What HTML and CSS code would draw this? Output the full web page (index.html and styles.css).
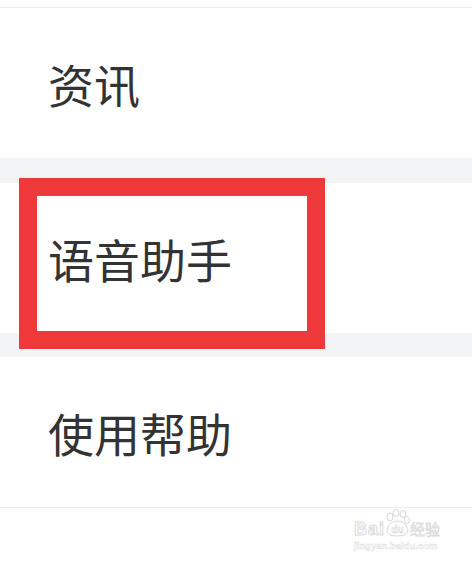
FILE: index.html
```html
<!DOCTYPE html>
<html lang="zh-CN">

<head>
    <meta charset="UTF-8">
    <meta name="viewport" content="width=device-width, initial-scale=1.0">
    <title>设置</title>
    <link rel="stylesheet" href="styles.css">
</head>

<body>
    <div class="page">
        <div class="menu">
            <div class="item">资讯</div>
            <div class="sep sep-a"></div>
            <div class="item">语音助手</div>
            <div class="sep sep-b"></div>
            <div class="item item-last">使用帮助</div>
        </div>

        <!-- red annotation box -->
        <div class="mark"></div>

        <div class="watermark">
            <div class="wm-top">
                <span class="wm-bai">Bai</span>
                <svg class="wm-paw" width="26" height="30" viewBox="0 0 26 30">
                    <g fill="none" stroke="#d8d8d8" stroke-width="1">
                        <ellipse cx="6" cy="8" rx="3" ry="4" />
                        <ellipse cx="12" cy="4" rx="3" ry="3.5" />
                        <ellipse cx="19" cy="5" rx="3" ry="3.5" />
                        <ellipse cx="23" cy="11" rx="2.5" ry="3.5" />
                        <path d="M3 20 Q6 12 13 12 Q21 12 24 20 Q25 27 13 27 Q2 27 3 20 Z" />
                    </g>
                    <text x="13.5" y="24" text-anchor="middle" class="wm-du">du</text>
                </svg>
                <span class="wm-jy">经验</span>
            </div>
            <div class="wm-url">jingyan.baidu.com</div>
        </div>
    </div>
</body>

</html>
```

FILE: styles.css
```css
body {
    margin: 0;
    background: #fff;
    font-family: "Noto Sans CJK SC", "Noto Sans", sans-serif;
}

.page {
    position: relative;
    width: 472px;
    height: 562px;
    overflow: hidden;
}

.menu {
    padding-top: 7px;
}

.item {
    height: 150px;
    display: flex;
    align-items: center;
    padding-left: 48px;
    font-size: 46px;
    color: #333;
    border-top: 1px solid #ebebeb;
    box-sizing: border-box;
}

.item + .sep + .item {
    border-top: none;
}

.item:first-child {
    height: 151px;
}

.item-last {
    border-bottom: 1px solid #ebebeb;
    height: 151px;
}

.sep {
    background: #f3f4f6;
}

.sep-a {
    height: 25px;
}

.sep-b {
    height: 24px;
}

.mark {
    position: absolute;
    left: 19px;
    top: 178px;
    width: 270px;
    height: 135px;
    border: 18px solid #ee3839;
}

.watermark {
    position: absolute;
    left: 354px;
    top: 509px;
    width: 92px;
    color: #fff;
}

.wm-top {
    display: flex;
    align-items: flex-end;
    height: 30px;
}

.wm-bai {
    font-family: "Liberation Sans", sans-serif;
    font-size: 18px;
    font-weight: bold;
    line-height: 20px;
    -webkit-text-stroke: 1px #dcdcdc;
    letter-spacing: 1px;
}

.wm-paw {
    margin-left: -1px;
}

.wm-du {
    font-family: "Liberation Sans", sans-serif;
    font-size: 10px;
    font-weight: bold;
    fill: #fff;
    stroke: #d8d8d8;
    stroke-width: 0.6;
}

.wm-jy {
    font-size: 15px;
    line-height: 20px;
    -webkit-text-stroke: 0.8px #dcdcdc;
}

.wm-url {
    font-family: "Liberation Sans", sans-serif;
    font-size: 9.5px;
    font-weight: bold;
    line-height: 12px;
    -webkit-text-stroke: 0.5px #e0e0e0;
    margin-top: 1px;
}
```
